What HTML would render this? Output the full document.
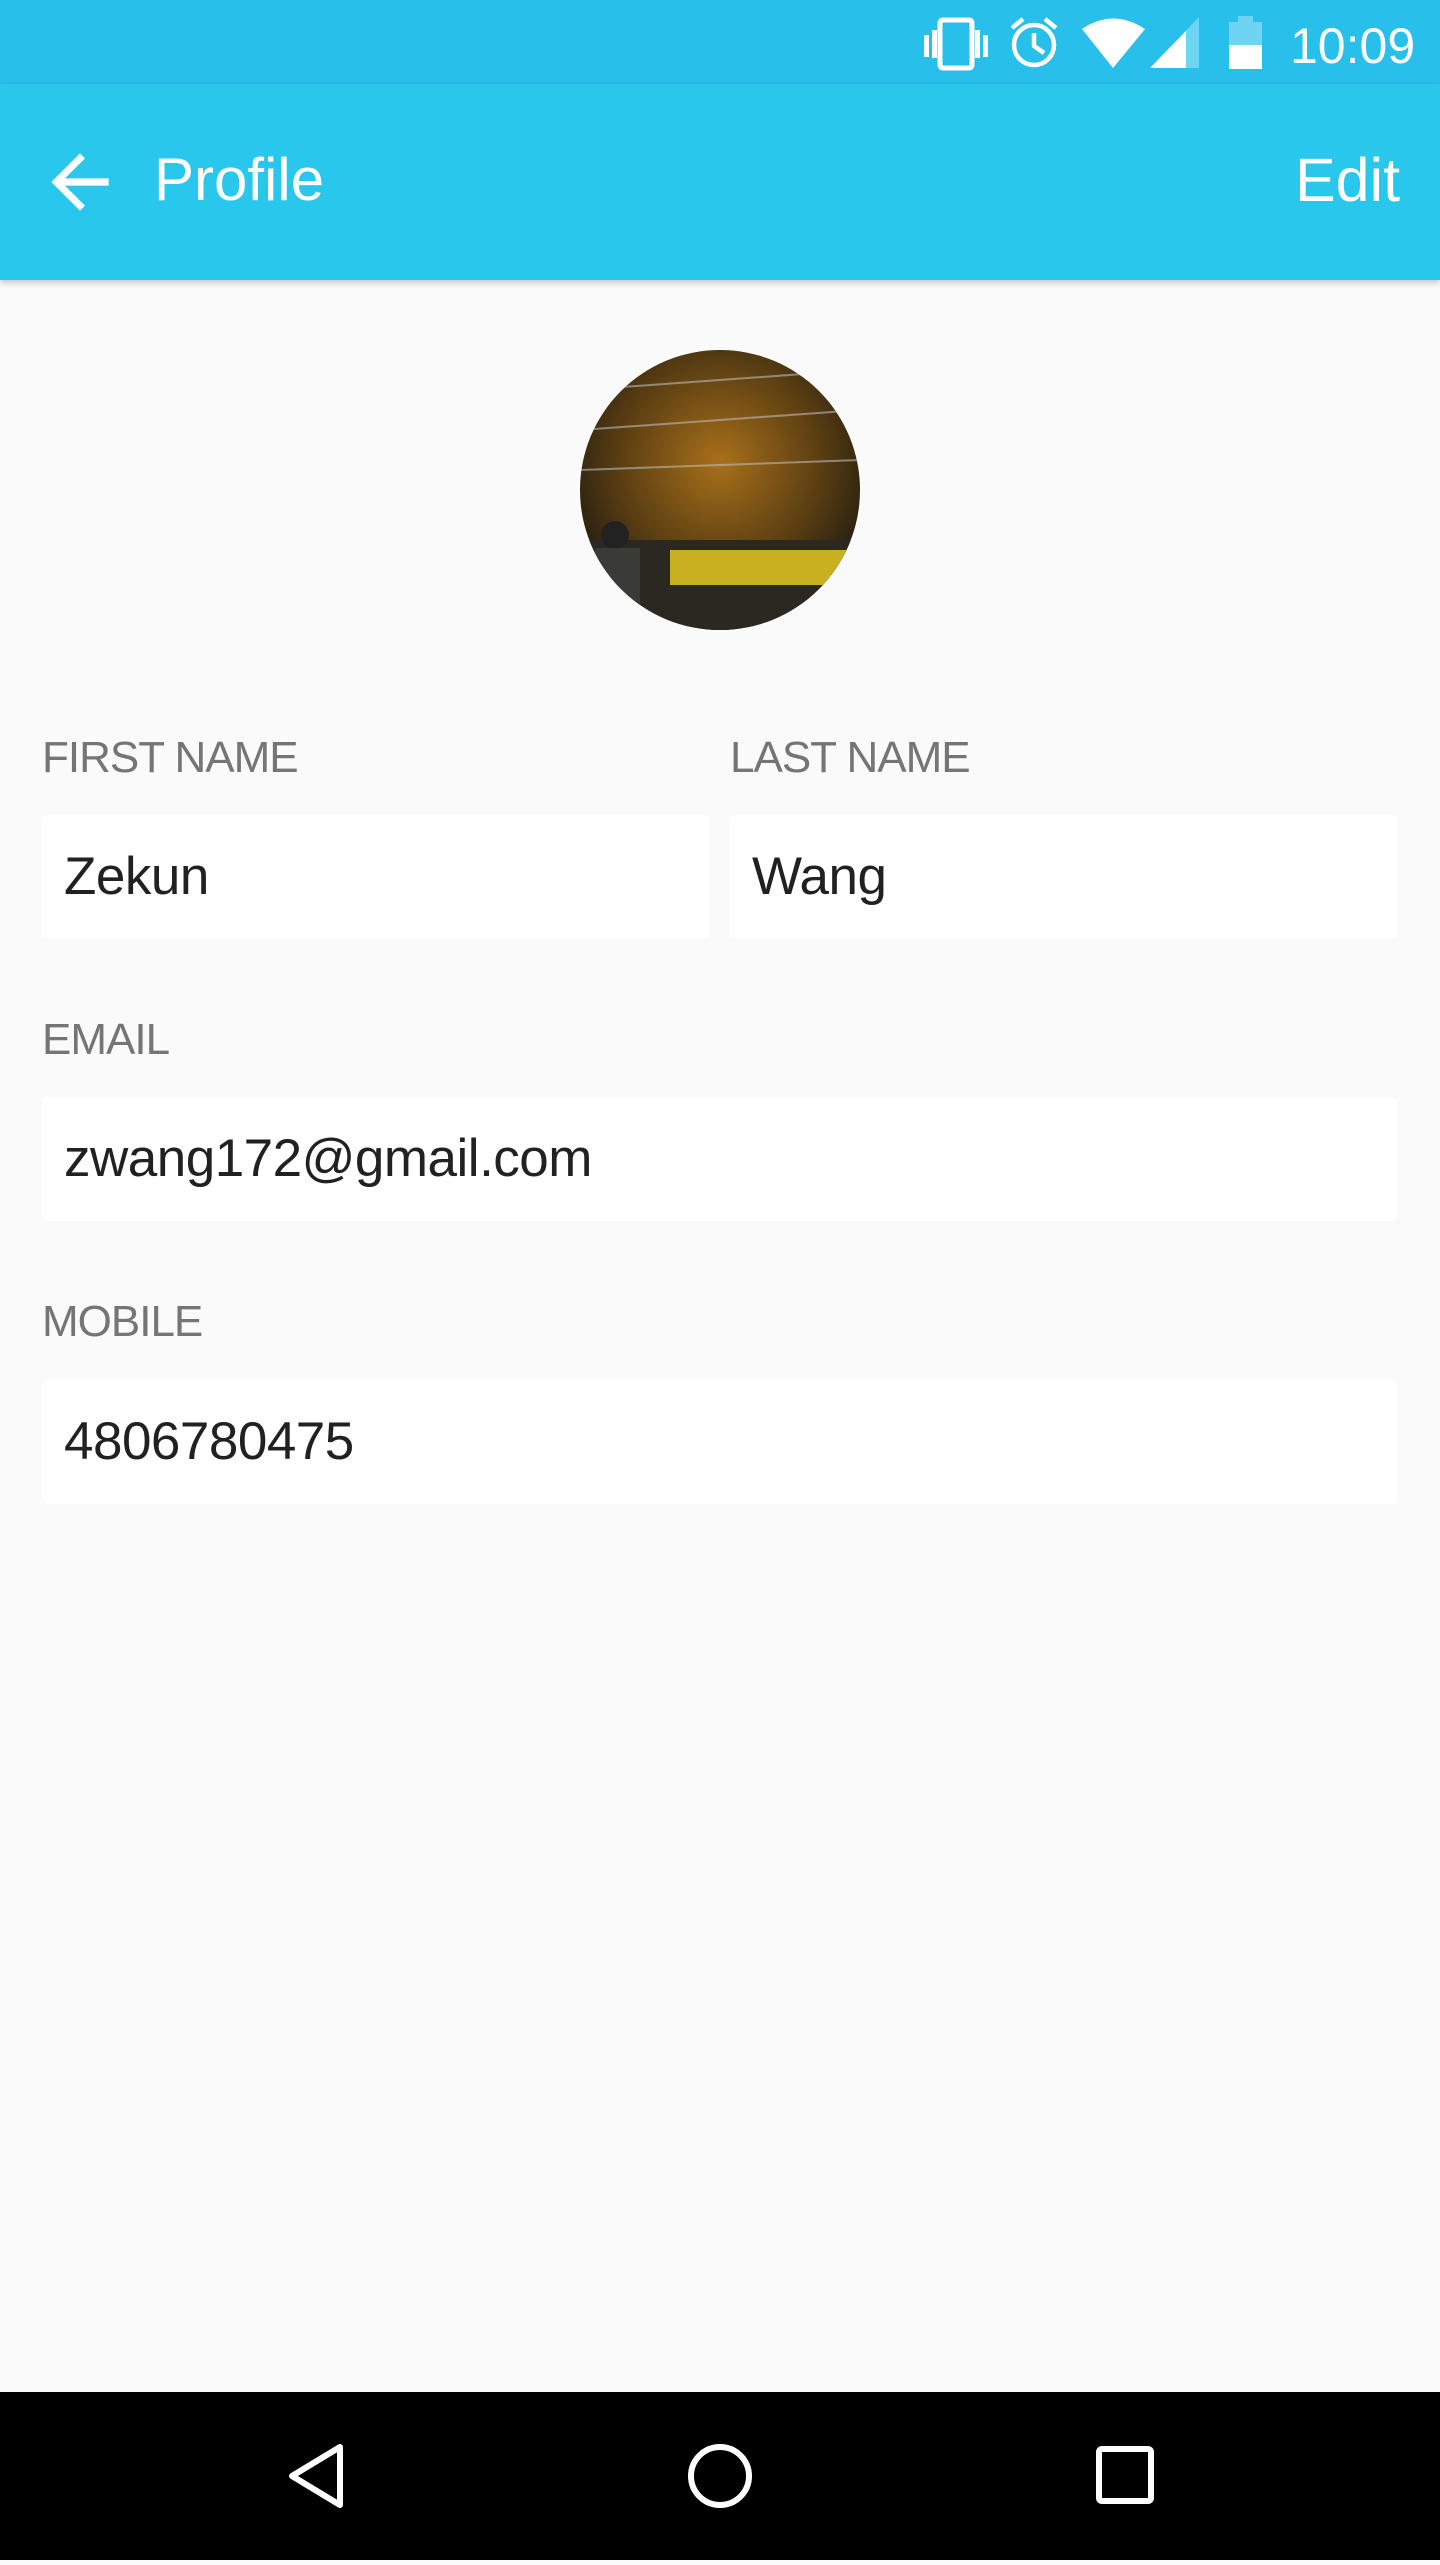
<!DOCTYPE html>
<html><head><meta charset="utf-8"><style>
*{margin:0;padding:0;box-sizing:border-box}
body{width:1440px;height:2560px;background:#fafafa;font-family:"Liberation Sans",sans-serif;position:relative;overflow:hidden}
.sb{position:absolute;left:0;top:0;width:1440px;height:84px;background:#28bfea}
.ab{position:absolute;left:0;top:84px;width:1440px;height:196px;background:#29c7ec;box-shadow:0 3px 6px rgba(0,0,0,.2)}
.t{position:absolute;color:#fff}
.lbl{position:absolute;color:#757575;font-size:44px;letter-spacing:-1px}
.inp{position:absolute;background:#fff;border-radius:5px;height:124px;font-size:53px;color:#212121;padding-left:22px;line-height:124px;letter-spacing:-0.5px}
.nav{position:absolute;left:0;top:2392px;width:1440px;height:168px;background:#000}
</style></head><body>
<div class="sb">
<svg style="position:absolute;left:0;top:0" width="1440" height="84">
<g fill="#fff">
<rect x="924" y="35" width="5" height="22"/><rect x="932" y="30" width="5" height="28"/>
<rect x="940" y="20" width="32" height="48" rx="3" fill="none" stroke="#fff" stroke-width="5"/>
<rect x="975" y="30" width="5" height="28"/><rect x="983" y="35" width="5" height="22"/>
</g>
<g stroke="#fff" fill="none" stroke-width="4.5">
<circle cx="1034" cy="45" r="20"/><path d="M1034 33v13l10 7M1012 28l11-9M1056 28l-11-9"/>
</g>
<path d="M1082 29Q1113 8 1145 29L1113 68Z" fill="#fff"/>
<path d="M1150 68L1199 17V68Z" fill="#6fd3f3"/><path d="M1150 68L1186 31V68Z" fill="#fff"/>
<rect x="1229" y="22" width="33" height="47" fill="#6fd3f3"/><rect x="1238" y="16" width="15" height="7" fill="#6fd3f3"/>
<rect x="1229" y="45" width="33" height="24" fill="#fff"/>
<text x="1290" y="63" fill="#fff" font-size="50" font-family="Liberation Sans">10:09</text>
</svg>
</div>
<div class="ab">
<svg style="position:absolute;left:37px;top:55px" width="86" height="86" viewBox="0 0 24 24"><path d="M20 11H7.8l5.6-5.6L12 4l-8 8 8 8 1.4-1.4L7.8 13H20z" fill="#fff"/></svg>
<div class="t" style="left:154px;top:61px;font-size:60px">Profile</div>
<div class="t" style="left:1295px;top:61px;font-size:61px">Edit</div>
</div>
<svg style="position:absolute;left:580px;top:350px" width="280" height="280">
<defs><radialGradient id="g" cx="50%" cy="40%" r="60%"><stop offset="0" stop-color="#a8701a"/><stop offset=".6" stop-color="#5a3e12"/><stop offset="1" stop-color="#1e1a10"/></radialGradient><clipPath id="c"><circle cx="140" cy="140" r="140"/></clipPath></defs>
<g clip-path="url(#c)">
<rect width="280" height="280" fill="url(#g)"/>
<path d="M0 40L280 20M0 80L280 60M0 120L280 110" stroke="#bbb" stroke-width="2" opacity=".6"/>
<rect x="0" y="190" width="280" height="90" fill="#2a2820"/>
<rect x="90" y="200" width="180" height="35" fill="#c9b020"/>
<circle cx="35" cy="185" r="14" fill="#222"/><rect x="15" y="198" width="45" height="82" fill="#3a3a36"/>
</g></svg>
<div class="lbl" style="left:42px;top:733px">FIRST NAME</div>
<div class="lbl" style="left:730px;top:733px">LAST NAME</div>
<div class="inp" style="left:42px;top:815px;width:667px">Zekun</div>
<div class="inp" style="left:730px;top:815px;width:667px">Wang</div>
<div class="lbl" style="left:42px;top:1015px">EMAIL</div>
<div class="inp" style="left:42px;top:1097px;width:1355px">zwang172@gmail.com</div>
<div class="lbl" style="left:42px;top:1297px">MOBILE</div>
<div class="inp" style="left:42px;top:1380px;width:1355px">4806780475</div>
<div class="nav">
<svg width="1440" height="168">
<g fill="none" stroke="#fff" stroke-width="6" stroke-linejoin="round">
<path d="M340 55L292 84L340 113Z"/>
<circle cx="720" cy="84" r="29"/>
<rect x="1099" y="57" width="52" height="52" rx="3"/>
</g></svg>
</div>
</body></html>
